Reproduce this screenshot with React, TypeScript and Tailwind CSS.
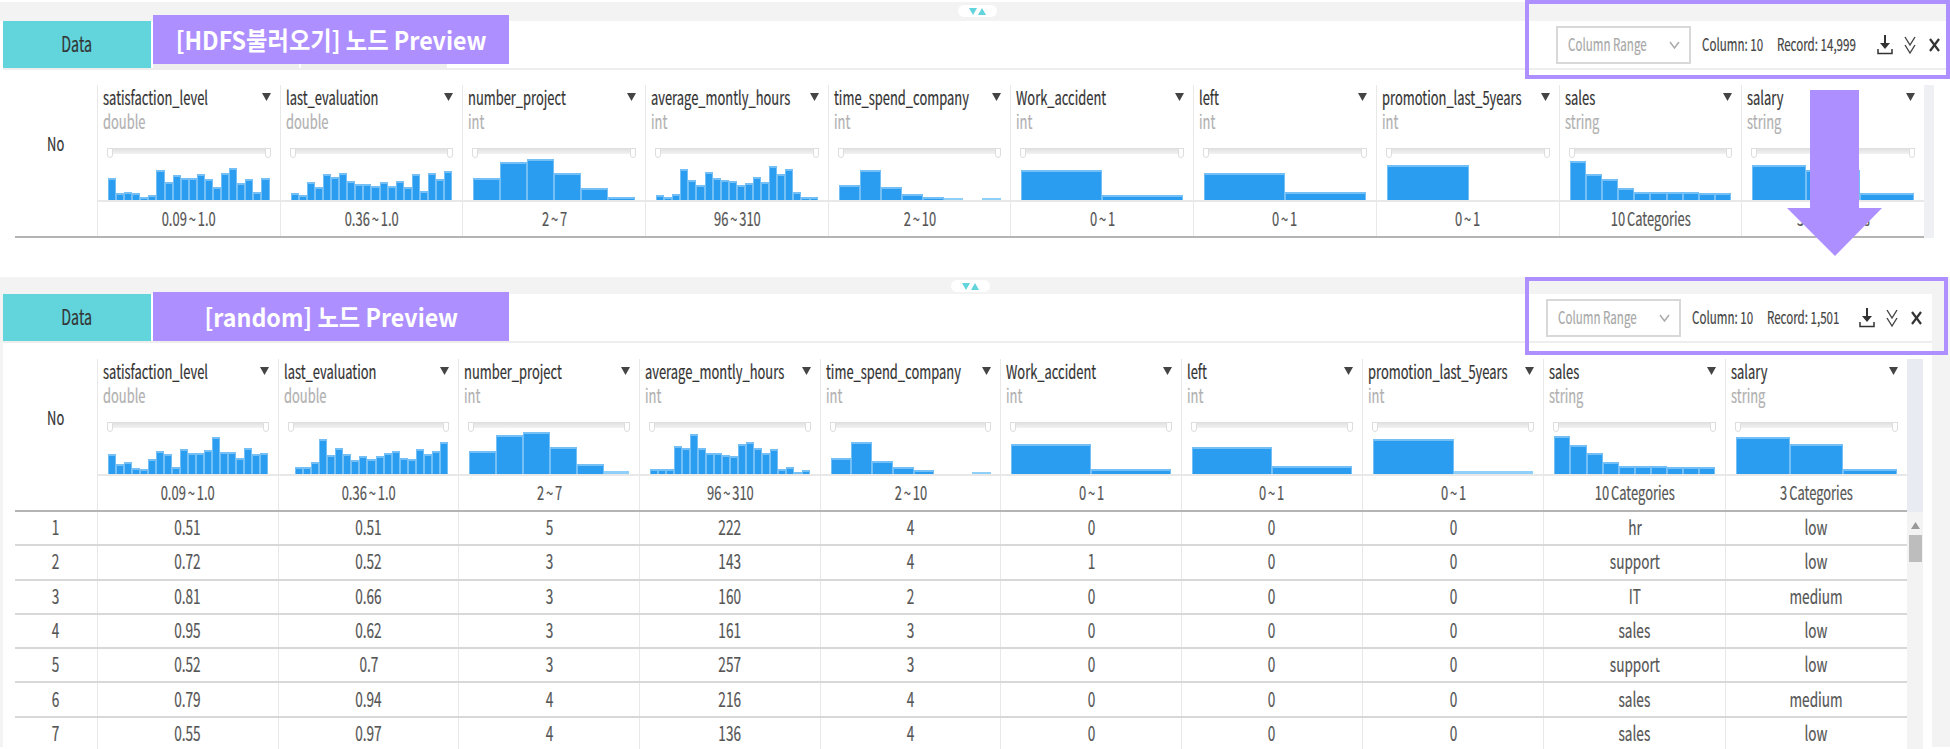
import type { ReactNode } from "react";

type Col = { name: string; type: string; range: string; bins: number[]; faint?: number[] };

const topCols: Col[] = [
  { name: "satisfaction_level", type: "double", range: "0.09 ~ 1.0", bins: [22, 7, 8, 7, 3, 5, 30, 18, 25, 22, 22, 26, 21, 13, 27, 32, 17, 21, 8, 22] },
  { name: "last_evaluation", type: "double", range: "0.36 ~ 1.0", bins: [7, 5, 18, 13, 26, 23, 27, 19, 16, 16, 14, 18, 14, 19, 13, 26, 9, 27, 21, 29] },
  { name: "number_project", type: "int", range: "2 ~ 7", bins: [22, 38, 41, 27, 12, 3] },
  { name: "average_montly_hours", type: "int", range: "96 ~ 310", bins: [5, 3, 6, 31, 20, 15, 28, 22, 20, 19, 15, 17, 23, 18, 34, 26, 31, 8, 3, 3] },
  { name: "time_spend_company", type: "int", range: "2 ~ 10", bins: [15, 30, 13, 6, 3, 2, 0, 2], faint: [5, 7] },
  { name: "Work_accident", type: "int", range: "0 ~ 1", bins: [30, 5] },
  { name: "left", type: "int", range: "0 ~ 1", bins: [27, 8] },
  { name: "promotion_last_5years", type: "int", range: "0 ~ 1", bins: [35, 0] },
  { name: "sales", type: "string", range: "10 Categories", bins: [39, 26, 21, 12, 8, 8, 8, 8, 7, 7] },
  { name: "salary", type: "string", range: "3 Categories", bins: [35, 30, 7] },
];

const bottomCols: Col[] = [
  { name: "satisfaction_level", type: "double", range: "0.09 ~ 1.0", bins: [20, 10, 12, 6, 5, 15, 23, 20, 7, 25, 21, 21, 24, 37, 22, 22, 16, 26, 20, 21] },
  { name: "last_evaluation", type: "double", range: "0.36 ~ 1.0", bins: [0, 7, 7, 12, 35, 19, 26, 20, 14, 18, 15, 18, 21, 23, 16, 15, 25, 20, 23, 32] },
  { name: "number_project", type: "int", range: "2 ~ 7", bins: [23, 39, 42, 27, 10, 3], faint: [5] },
  { name: "average_montly_hours", type: "int", range: "96 ~ 310", bins: [5, 5, 5, 28, 26, 40, 26, 21, 21, 19, 18, 30, 32, 26, 21, 25, 5, 7, 2, 4] },
  { name: "time_spend_company", type: "int", range: "2 ~ 10", bins: [16, 32, 13, 7, 4, 0, 0, 2], faint: [7] },
  { name: "Work_accident", type: "int", range: "0 ~ 1", bins: [30, 5] },
  { name: "left", type: "int", range: "0 ~ 1", bins: [27, 8] },
  { name: "promotion_last_5years", type: "int", range: "0 ~ 1", bins: [35, 3], faint: [1] },
  { name: "sales", type: "string", range: "10 Categories", bins: [38, 29, 21, 12, 8, 8, 8, 7, 7, 7] },
  { name: "salary", type: "string", range: "3 Categories", bins: [37, 30, 5] },
];

const rows = [
  ["1", "0.51", "0.51", "5", "222", "4", "0", "0", "0", "hr", "low"],
  ["2", "0.72", "0.52", "3", "143", "4", "1", "0", "0", "support", "low"],
  ["3", "0.81", "0.66", "3", "160", "2", "0", "0", "0", "IT", "medium"],
  ["4", "0.95", "0.62", "3", "161", "3", "0", "0", "0", "sales", "low"],
  ["5", "0.52", "0.7", "3", "257", "3", "0", "0", "0", "support", "low"],
  ["6", "0.79", "0.94", "4", "216", "4", "0", "0", "0", "sales", "medium"],
  ["7", "0.55", "0.97", "4", "136", "4", "0", "0", "0", "sales", "low"],
];

const bottomGrid = "grid-cols-[82px_repeat(7,180.7px)_repeat(3,181.6px)]";

// the screenshot is squeezed sideways, so text gets the same treatment
function Sq({ children, left }: { children: ReactNode; left?: boolean }) {
  return (
    <span className={`inline-block -translate-y-[1px] whitespace-nowrap scale-x-[0.68] [-webkit-text-stroke:0.2px_currentColor] ${left ? "origin-left" : "origin-center"}`}>
      {children}
    </span>
  );
}

function Histogram({ col }: { col: Col }) {
  return (
    <div className="mx-[10px] flex h-[43px] items-end">
      {col.bins.map((h, i) =>
        h === 0 ? (
          <div key={i} className="flex-1" />
        ) : (
          <div
            key={i}
            className={
              col.faint?.includes(i)
                ? "flex-1 border-t border-[#8fd0fa] bg-[#8fd0fa]"
                : "flex-1 border-x-[0.5px] border-t-2 border-[#74c0f6] bg-[#2a9df1]"
            }
            style={{ height: h }}
          />
        ),
      )}
    </div>
  );
}

function HeaderCell({ col }: { col: Col }) {
  return (
    <div className="flex min-w-0 flex-col border-l border-[#e8e8e8]">
      <div className="flex h-[24px] items-center pl-[5px] pr-[9px] text-[19px] text-[#333]">
        <div className="w-0 flex-1">
          <Sq left>{col.name}</Sq>
        </div>
        <svg className="shrink-0" width="9" height="8" viewBox="0 0 9 8" aria-hidden="true">
          <polygon points="0,0 9,0 4.5,8" fill="#444" />
        </svg>
      </div>
      <div className="flex h-[24px] items-center pl-[5px] text-[19px] text-[#b0b0b0]">
        <Sq left>{col.type}</Sq>
      </div>
      <div className="relative mx-[9px] mt-[15px] h-[9px]">
        <div className="h-[6px] bg-gradient-to-b from-[#dedede] to-[#f2f2f2]" />
        <div className="absolute left-0 top-0 h-[10px] w-[6px] rounded-b-sm border border-[#dddddd] bg-white" />
        <div className="absolute right-0 top-0 h-[10px] w-[6px] rounded-b-sm border border-[#dddddd] bg-white" />
      </div>
      <Histogram col={col} />
      <div className="flex h-[36px] items-center justify-center border-t-2 border-[#e8e8e8] pb-[2px] text-[19px] text-[#555] [word-spacing:-1.5px]">
        <Sq>{col.range}</Sq>
      </div>
    </div>
  );
}

function DownloadIcon() {
  return (
    <svg className="shrink-0" width="16" height="20" viewBox="0 0 16 20" aria-hidden="true">
      <path d="M8 0v9" stroke="#333" strokeWidth="2" />
      <path d="M3 8h10l-5 6z" fill="#333" />
      <path d="M1 14v4.5h14V14" fill="none" stroke="#333" strokeWidth="1.5" />
    </svg>
  );
}

function ChevronsIcon() {
  return (
    <svg className="shrink-0" width="14" height="20" viewBox="0 0 14 20" fill="none" stroke="#444" strokeWidth="1.4" aria-hidden="true">
      <path d="M2 2l5 8 5-8" />
      <path d="M2 10l5 8 5-8" />
    </svg>
  );
}

function XIcon() {
  return (
    <svg className="shrink-0" width="11" height="14" viewBox="0 0 11 14" fill="none" stroke="#333" strokeWidth="2.2" aria-hidden="true">
      <path d="M1 1l9 12" />
      <path d="M10 1L1 13" />
    </svg>
  );
}

function Toolbar({ record, recordWidth }: { record: string; recordWidth: string }) {
  return (
    <div className="ml-auto flex items-center">
      <div className="flex h-[38px] w-[135px] items-center border-2 border-[#d8d8d8] pl-[10px] pr-[9px] text-[17px] text-[#a8a8a8]">
        <div className="w-0 flex-1">
          <Sq left>Column Range</Sq>
        </div>
        <svg className="shrink-0" width="11" height="8" viewBox="0 0 11 8" fill="none" stroke="#aaa" strokeWidth="1.5" aria-hidden="true">
          <path d="M1 1l4.5 6L10 1" />
        </svg>
      </div>
      <div className="ml-[11px] w-[75px] text-[17px] text-[#444]">
        <Sq left>Column: 10</Sq>
      </div>
      <div className={`text-[17px] text-[#444] ${recordWidth}`}>
        <Sq left>Record: {record}</Sq>
      </div>
      <DownloadIcon />
      <div className="ml-[10px]">
        <ChevronsIcon />
      </div>
      <div className="ml-[12px]">
        <XIcon />
      </div>
    </div>
  );
}

function Splitter({ className }: { className: string }) {
  return (
    <div className={`absolute flex h-[12px] w-[39px] items-center justify-center gap-[1px] rounded-full bg-white ${className}`}>
      <svg width="8" height="7" viewBox="0 0 8 7" aria-hidden="true">
        <polygon points="0,0 8,0 4,7" fill="#62d4dc" />
      </svg>
      <svg width="8" height="7" viewBox="0 0 8 7" aria-hidden="true">
        <polygon points="0,7 8,7 4,0" fill="#62d4dc" />
      </svg>
    </div>
  );
}

function Tabs({ label, record, recordWidth, labelTop }: { label: string; record: string; recordWidth: string; labelTop: string }) {
  return (
    <div className="relative flex h-[49px] items-stretch border-b-2 border-[#eeeeee] bg-white">
      <div className="flex w-[148px] items-center justify-center bg-[#62d4dc] text-[21px] text-[#333]">
        <Sq>Data</Sq>
      </div>
      <div className="ml-[2px] mt-auto h-[4px] w-[146px] bg-[#eeeeee]" />
      <div className="ml-[2px] mt-auto h-[4px] w-[146px] bg-[#eeeeee]" />
      <div className="ml-auto flex items-center pr-[10px]">
        <Toolbar record={record} recordWidth={recordWidth} />
      </div>
      <div className={`absolute left-[150px] flex h-[49px] w-[356px] items-center justify-center bg-[#ae8fff] text-[25px] font-semibold text-white ${labelTop}`}>
        <span className="inline-block whitespace-nowrap scale-x-[0.93]">{label}</span>
      </div>
    </div>
  );
}

function TableHead({ cols, grid }: { cols: Col[]; grid: string }) {
  return (
    <div className={`grid border-b-2 border-[#b4b4b4] ${grid}`}>
      <div className="flex items-center justify-center pb-[35px] text-[19px] text-[#333]">
        <Sq>No</Sq>
      </div>
      {cols.map((c) => (
        <HeaderCell key={c.name} col={c} />
      ))}
    </div>
  );
}

export default function App() {
  return (
    <div className="relative h-[749px] w-[1950px] overflow-hidden bg-white font-['Noto_Sans_CJK_KR','Noto_Sans',sans-serif] leading-none">
      {/* HDFS node preview */}
      <section className="mt-[2px] h-[275px]">
        <div className="relative h-[19px] bg-[#f3f3f3]">
          <Splitter className="left-[958px] top-[3px]" />
        </div>
        <div className="pl-[3px]">
          <Tabs label="[HDFS불러오기] 노드 Preview" record="14,999" recordWidth="w-[100px]" labelTop="-top-[6px]" />
          <div className="mt-[15px] flex pl-[12px]">
            <div className="w-[1909px]">
              <TableHead cols={topCols} grid="grid-cols-[82px_repeat(10,182.7px)]" />
            </div>
            <div className="w-[10px] bg-[#eef0f3]" />
          </div>
        </div>
      </section>

      {/* random node preview */}
      <section className="h-[470px] bg-[#f3f3f3] pt-[17px]">
        <Splitter className="left-[951px] top-[280px]" />
        <div className="ml-[3px] h-full w-[1929px] rounded-tr-md bg-white">
          <Tabs label="[random] 노드 Preview" record="1,501" recordWidth="w-[92px]" labelTop="-top-[2px]" />
          <div className="mt-[16px] flex pl-[12px]">
            <div className="w-[1892px]">
              <TableHead cols={bottomCols} grid={bottomGrid} />
              {rows.map((row) => (
                <div
                  key={row[0]}
                  className={`grid h-[34.3px] border-b-2 border-[#d8d8d8] first-of-type:h-[36px] ${bottomGrid}`}
                >
                  {row.map((v, i) => (
                    <div key={i} className={`flex items-center justify-center text-[20px] text-[#555] ${i > 0 ? "border-l border-[#e8e8e8]" : ""}`}>
                      <Sq>{v}</Sq>
                    </div>
                  ))}
                </div>
              ))}
            </div>
            <div className="flex w-[16px] flex-col bg-[#f3f3f3]">
              <div className="h-[153px] bg-[#e9ebf2]" />
              <div className="flex flex-1 flex-col items-center pt-[10px]">
                <svg width="9" height="7" viewBox="0 0 9 7" aria-hidden="true">
                  <polygon points="0,7 9,7 4.5,0" fill="#999" />
                </svg>
                <div className="mt-[6px] h-[27px] w-[13px] bg-[#bdbdbd]" />
              </div>
            </div>
          </div>
        </div>
      </section>

      {/* annotations drawn over the screenshot */}
      <div className="absolute left-[1525px] top-0 h-[79px] w-[425px] border-4 border-[#ae8fff]" />
      <div className="absolute left-[1525px] top-[277px] h-[78px] w-[423px] border-4 border-[#ae8fff]" />
      <svg className="absolute left-[1787px] top-[90px]" width="95" height="166" viewBox="0 0 95 166" aria-hidden="true">
        <polygon points="23,0 72,0 72,118 95,118 48,166 0,118 23,118" fill="#ae8fff" />
      </svg>
    </div>
  );
}
